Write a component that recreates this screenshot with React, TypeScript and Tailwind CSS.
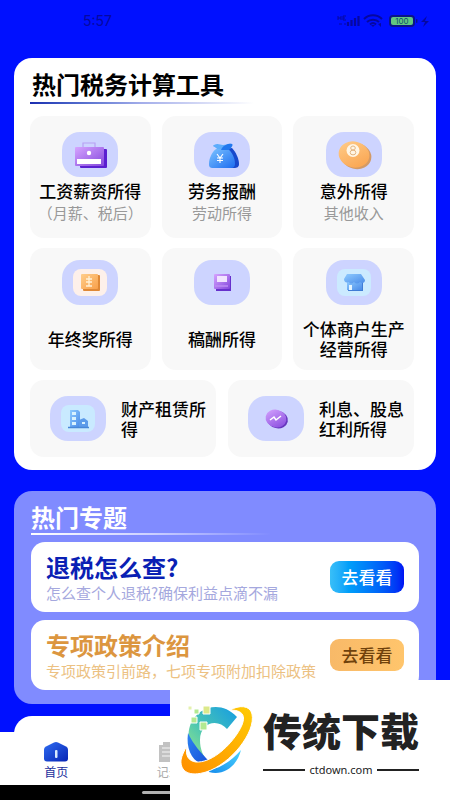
import React from "react";
import type { ReactNode } from "react";

const cjk = "font-['Noto_Sans_CJK_SC',sans-serif]";

function IconBox({ children }: { children: ReactNode }) {
  return (
    <svg viewBox="0 0 56 45" className="h-[45px] w-14 shrink-0 rounded-[18px] bg-[#cdd4ff]" aria-hidden="true">
      <defs>
        <linearGradient id="violet" x1="0" y1="0" x2="1" y2="1">
          <stop offset="0" stopColor="#d6a4ff" />
          <stop offset="1" stopColor="#8448dc" />
        </linearGradient>
        <linearGradient id="azure" x1="0" y1="0" x2="1" y2="1">
          <stop offset="0" stopColor="#7cc3ff" />
          <stop offset="1" stopColor="#1c6cf0" />
        </linearGradient>
        <linearGradient id="sky" x1="0" y1="0" x2="1" y2="1">
          <stop offset="0" stopColor="#8ecbff" />
          <stop offset="1" stopColor="#4a8be8" />
        </linearGradient>
        <linearGradient id="amber" x1="0" y1="0" x2="1" y2="1">
          <stop offset="0" stopColor="#ffce8c" />
          <stop offset="1" stopColor="#f9a04a" />
        </linearGradient>
      </defs>
      {children}
    </svg>
  );
}

const BriefcaseIcon = () => (
  <IconBox>
    <path d="M21 16V11h12v5" fill="none" stroke="#b8a0f4" strokeWidth="1.2" />
    <rect x="18" y="17" width="27" height="19" rx="1" fill="#5a1fd0" />
    <rect x="13" y="15" width="29" height="19" rx="1" fill="url(#violet)" />
    <rect x="15" y="27" width="24" height="5" fill="#fff" />
    <circle cx="27" cy="21" r="2.2" fill="#fff" />
  </IconBox>
);

const MoneyBagIcon = () => (
  <IconBox>
    <path d="M30 17l8-1c4 4 7 11 7 16 0 3-2 4-5 4H22z" fill="#1748cc" />
    <path d="M22 17c-4 3-7 9-7 15 0 3 1 4 4 4h18c3 0 4-2 4-4 0-6-3-12-7-15z" fill="url(#azure)" />
    <path d="M20 13c4-2 6 0 9 0s6-2 8-1c2 1-1 3-3 5H23c-1-2-6-3-3-4z" fill="#5cacfc" />
    <path d="M28 16c2-3 7-5 10-4 2 1-2 5-3 6h-8z" fill="#2278ee" />
    <path d="M23 22l3 4 3-4M26 26v5M23 26h6M23 28.500h6" fill="none" stroke="#fff" strokeWidth="1.1" />
  </IconBox>
);

const BallIcon = () => (
  <IconBox>
    <ellipse cx="30" cy="24" rx="15.5" ry="13" transform="rotate(14 30 24)" fill="#d39a66" />
    <ellipse cx="28" cy="22.5" rx="15.5" ry="13" transform="rotate(14 28 22.5)" fill="url(#amber)" />
    <circle cx="27" cy="18.5" r="6.5" fill="#fff6e6" />
    <ellipse cx="27" cy="16" rx="2.3" ry="2" fill="none" stroke="#e2b480" strokeWidth="1" />
    <ellipse cx="27" cy="20.5" rx="2.8" ry="2.4" fill="none" stroke="#e2b480" strokeWidth="1" />
  </IconBox>
);

const BonusIcon = () => (
  <IconBox>
    <rect x="11" y="9" width="34" height="27" rx="8" fill="#fdf0ea" />
    <rect x="21" y="15" width="17" height="16" rx="1" fill="#df8836" />
    <rect x="19" y="14" width="17" height="15" rx="1" fill="url(#amber)" />
    <path d="M27 16v10M24 19h6M24 22h6M24 26h6" stroke="#fff1d8" strokeWidth="1.3" fill="none" />
  </IconBox>
);

const BookIcon = () => (
  <IconBox>
    <path d="M22 16h15v15H22z" fill="#6630cc" />
    <rect x="20" y="14" width="16" height="15" rx="1" fill="url(#violet)" />
    <rect x="23" y="16" width="10" height="6" fill="#f1e4ff" />
    <path d="M21 26h13" stroke="#bc8cf5" strokeWidth="1.5" />
  </IconBox>
);

const ShopIcon = () => (
  <IconBox>
    <rect x="11" y="9" width="34" height="27" rx="8" fill="#cbeaff" />
    <path d="M22 22h15v9H22z" fill="#3f7cd5" />
    <path d="M21 21h15v9H21z" fill="url(#sky)" />
    <path d="M21 14h14l4 6c0 3-3 4-5 2-2 2-4 2-6 0-2 2-4 2-5 0-3 1-5 0-5-3z" fill="url(#sky)" />
    <path d="M23 25h3v5h-3z" fill="#e4f5ff" />
  </IconBox>
);

const BuildingIcon = () => (
  <IconBox>
    <rect x="11" y="9" width="34" height="27" rx="8" fill="#c9eaff" />
    <path d="M20 14h8l2 2v15H20z" fill="url(#sky)" />
    <path d="M29 24l5-2 4 3v6h-9z" fill="#5c9bea" />
    <path d="M22 16h4v3h-4zM22 21h4v3h-4zM22 26h4v3h-4zM32 26h3v2h-3z" fill="#d8f2ff" />
    <path d="M18 31.5h21" stroke="#4787d8" strokeWidth="1.5" />
  </IconBox>
);

const TrendIcon = () => (
  <IconBox>
    <ellipse cx="29.5" cy="23.5" rx="10.500" ry="8.800" transform="rotate(12 29.5 23.5)" fill="#6637bd" />
    <ellipse cx="28" cy="22.5" rx="10.500" ry="8.800" transform="rotate(12 28 22.5)" fill="url(#violet)" />
    <path d="M22 24l4-3 2 3 5-4" fill="none" stroke="#fff" strokeWidth="1.5" />
  </IconBox>
);

const incomeTools = [
  { title: "工资薪资所得", note: "（月薪、税后）", icon: <BriefcaseIcon /> },
  { title: "劳务报酬", note: "劳动所得", icon: <MoneyBagIcon /> },
  { title: "意外所得", note: "其他收入", icon: <BallIcon /> },
];

const otherTools = [
  { title: "年终奖所得", icon: <BonusIcon /> },
  { title: "稿酬所得", icon: <BookIcon /> },
  { title: "个体商户生产经营所得", icon: <ShopIcon /> },
];

const wideTools = [
  { title: "财产租赁所得", icon: <BuildingIcon /> },
  { title: "利息、股息红利所得", icon: <TrendIcon /> },
];

const topics = [
  {
    title: "退税怎么查?",
    text: "怎么查个人退税?确保利益点滴不漏",
    titleColor: "text-[#0a1fb4]",
    textColor: "text-[#a5a8de]",
    button: "bg-linear-to-r from-[#38bff8] to-[#0010f4] text-white",
  },
  {
    title: "专项政策介绍",
    text: "专项政策引前路，七项专项附加扣除政策",
    titleColor: "text-[#dc963f]",
    textColor: "text-[#ecc182]",
    button: "bg-linear-to-r from-[#f8b968] to-[#ffc56c] text-[#70420c]",
  },
];

function StatusBar() {
  return (
    <header className="flex h-[58px] shrink-0 items-start justify-between pt-[11px] pr-5 pl-[83px] text-[#0608a0]">
      <span className="font-['Inter',sans-serif] text-sm leading-5">5:57</span>
      <svg viewBox="0 0 94 20" className="h-5 w-[94px]" aria-hidden="true">
        <path d="M2 5v4M2 7h3M5 5v4M7 5v4h3M7 5h3M7 7h2M3 13h3M8 13h2" stroke="currentColor" fill="none" />
        <path d="M12 15v-4M15.500 15v-6M19 15V7M22.500 15V5" stroke="currentColor" strokeWidth="2.2" />
        <path d="M28 8c5-5 13-5 18 0M31 11c3-3 9-3 12 0M34 13.500c2-2 4-2 6 0" fill="none" stroke="currentColor" strokeWidth="2" />
        <path d="M35 14h4l-2 2zM42 13l3 3v-4z" fill="currentColor" />
        <rect x="53" y="4" width="26" height="12" rx="4" fill="#0a1488" />
        <rect x="55" y="6" width="22" height="8" rx="2" fill="#62c781" />
        <rect x="80" y="8" width="1.5" height="4" rx="1" fill="#0a1488" />
        <text x="66" y="13" textAnchor="middle" fontSize="8" fontFamily="Inter, sans-serif" fill="#0e4f70">100</text>
        <path d="M91 5l-6 6h4l-2 5 6-6h-4z" fill="currentColor" />
      </svg>
    </header>
  );
}

function Watermark() {
  return (
    <aside className="absolute right-0 bottom-0 flex h-[120px] w-[280px] bg-white">
      <svg viewBox="0 0 88 120" className="h-[120px] w-[88px] shrink-0" aria-hidden="true">
        <defs>
          <linearGradient id="cTop" x1="0.1" y1="1" x2="1" y2="0.1">
            <stop offset="0" stopColor="#92e58c" />
            <stop offset="0.45" stopColor="#48c4b4" />
            <stop offset="1" stopColor="#1aa0df" />
          </linearGradient>
          <linearGradient id="cLeft" x1="0" y1="0" x2="1" y2="1">
            <stop offset="0" stopColor="#2d83f2" />
            <stop offset="1" stopColor="#1750d8" />
          </linearGradient>
          <linearGradient id="cTail" x1="0" y1="1" x2="1" y2="0">
            <stop offset="0" stopColor="#168cec" />
            <stop offset="1" stopColor="#4cd5ff" />
          </linearGradient>
          <linearGradient id="ring" x1="0" y1="1" x2="1" y2="0">
            <stop offset="0" stopColor="#ff8e00" />
            <stop offset="1" stopColor="#ffcb05" />
          </linearGradient>
        </defs>
        <path d="M38 82C20 77 15 57 21 43c7-15 29-24 46-6L57 49c-9-11-27-7-27 11 0 9 3 16 8 22z" fill="url(#cTop)" />
        <path d="M18 53c5 11 13 20 21 28l-8 3c-10-5-15-16-13-31z" fill="url(#cLeft)" />
        <path d="M39 90c12-2 22-9 32-20-4 16-17 26-32 22z" fill="url(#cTail)" />
        <path
          d="M60 30c9-5 20-5 22 4 4 18-21 50-46 58-16 5-26 0-25-12 1-5 3-9 6-14-2 9 1 15 9 16 14 1 31-13 41-28 10-15 9-24-7-24z"
          fill="url(#ring)"
          stroke="#fff"
          strokeWidth="1"
        />
        <g fill="#b3e991" stroke="#fff">
          <path d="M33 26h7v8h-7z" fill="#dce98a" />
          <path d="M24 29h5v5h-5zM21 37h6v6h-6zM30 42h7v8h-7z" />
          <path d="M18 26h4v4h-4z" fill="#e4f1ae" />
        </g>
      </svg>
      <div className="flex flex-1 flex-col pt-6 pr-[31px] pl-[5px] text-[#222]">
        <strong className={`${cjk} text-[39px] leading-[50px] font-black whitespace-nowrap`}>传统下载</strong>
        <div className="mt-2 flex items-center gap-1">
          <span className="h-0.5 flex-1 bg-[#222]" />
          <span className="font-['Noto_Sans',sans-serif] text-[11px] leading-4">ctdown.com</span>
          <span className="h-0.5 flex-1 bg-[#222]" />
        </div>
      </div>
    </aside>
  );
}

export default function App() {
  return (
    <div className={`relative flex h-screen flex-col overflow-hidden bg-[#0010ff] ${cjk}`}>
      <StatusBar />
      <main className="flex min-h-0 flex-1 flex-col overflow-hidden px-3.5">
        <section className="shrink-0 rounded-[18px] bg-white pt-2.5 pr-[22px] pb-[13px] pl-4">
          <h1 className="pl-0.5 text-2xl leading-8 font-bold text-black">热门税务计算工具</h1>
          <div className="mt-0.5 h-0.5 w-56 bg-linear-to-r from-[#1c2cb0] via-[#a4aeea] to-transparent" />
          <div className="mt-3 grid grid-cols-3 gap-x-[11px] gap-y-2.5">
            {incomeTools.map((t) => (
              <button key={t.title} type="button" className="flex h-[122px] flex-col items-center rounded-[14px] bg-[#f8f8f8] pt-4">
                {t.icon}
                <span className="mt-0.5 text-[17px] leading-6 font-medium whitespace-nowrap text-black">{t.title}</span>
                <span className="text-[15px] leading-5 whitespace-nowrap text-[#999]">{t.note}</span>
              </button>
            ))}
            {otherTools.map((t) => (
              <button key={t.title} type="button" className="flex h-[122px] flex-col items-center rounded-[14px] bg-[#f8f8f8] pt-3">
                {t.icon}
                <span className="mt-3.5 flex h-10 w-[104px] items-center justify-center text-[17px] leading-5 font-medium text-black">{t.title}</span>
              </button>
            ))}
          </div>
          <div className="mt-2.5 grid grid-cols-2 gap-3">
            {wideTools.map((t) => (
              <button key={t.title} type="button" className="flex h-[77px] items-center gap-[15px] rounded-[14px] bg-[#f8f8f8] pl-5 text-left">
                {t.icon}
                <span className="w-[86px] text-[17px] leading-5 font-medium text-black">{t.title}</span>
              </button>
            ))}
          </div>
        </section>

        <section className="mt-[21px] shrink-0 rounded-[18px] bg-[#808bff] px-[17px] pt-2.5 pb-3.5">
          <h2 className="text-2xl leading-8 font-bold text-white">热门专题</h2>
          <div className="h-0.5 w-60 bg-linear-to-r from-white via-[#ccd0ff] to-transparent" />
          <div className="mt-[7px] flex flex-col gap-2">
            {topics.map((t) => (
              <article key={t.title} className="flex h-[70px] items-center justify-between rounded-[14px] bg-white px-[15px]">
                <div>
                  <h3 className={`text-2xl leading-8 font-bold whitespace-nowrap ${t.titleColor}`}>{t.title}</h3>
                  <p className={`text-[15px] leading-5 whitespace-nowrap ${t.textColor}`}>{t.text}</p>
                </div>
                <button type="button" className={`h-8 w-[74px] shrink-0 rounded-[9px] text-[17px] leading-6 font-medium ${t.button}`}>去看看</button>
              </article>
            ))}
          </div>
        </section>

        <section className="mt-3 h-40 shrink-0 rounded-[18px] bg-white" />
      </main>

      <nav className="flex h-[53px] shrink-0 bg-white">
        <a href="#home" className="flex w-1/4 flex-col items-center pt-2.5 text-[#1a2f9c]">
          <svg viewBox="0 0 24 20" className="h-5 w-6" aria-hidden="true">
            <defs>
              <linearGradient id="home" x1="0" y1="0" x2="1" y2="1">
                <stop offset="0" stopColor="#2f6df2" />
                <stop offset="1" stopColor="#0624b4" />
              </linearGradient>
            </defs>
            <path d="M10 0.500q2-1 4 0l8 4q2 1 2 3v9q0 3-3 3H3q-3 0-3-3v-9q0-2 2-3z" fill="url(#home)" />
            <rect x="11" y="8" width="2.5" height="8" rx="1" fill="#d8eaff" />
          </svg>
          <span className="text-xs leading-5">首页</span>
        </a>
        <a href="#records" className="flex w-1/4 flex-col items-center pt-2.5 text-[#aaa]">
          <svg viewBox="0 0 20 20" className="h-5 w-5" aria-hidden="true">
            <path d="M0 3h4V0h12v3h4v17H0z" fill="#c2c2c2" />
            <path d="M3 6h14M3 10h14M3 14h14" stroke="#f5f5f5" strokeWidth="1.2" />
          </svg>
          <span className="text-xs leading-5">记录</span>
        </a>
      </nav>
      <div className="flex h-[15px] shrink-0 items-center justify-center bg-black">
        <span className="h-[3px] w-[166px] rounded-full bg-[#b0b0b0]" />
      </div>
      <Watermark />
    </div>
  );
}
